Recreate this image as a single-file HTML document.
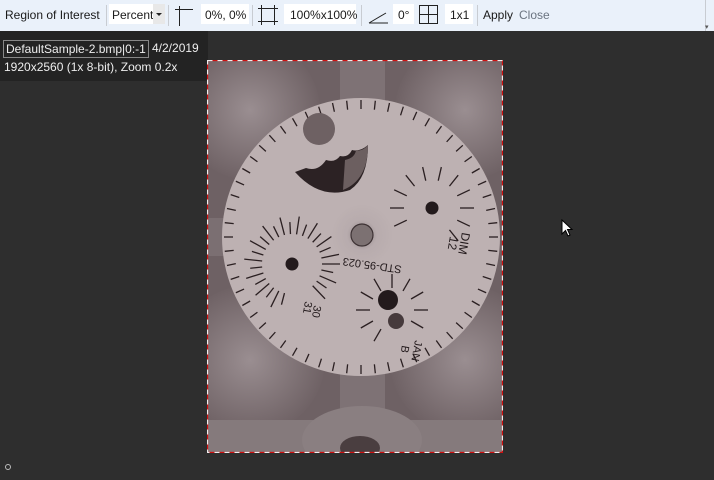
<!DOCTYPE html>
<html><head><style>
body{margin:0;width:714px;height:480px;background:#2e2e2e;position:relative;overflow:hidden;font-family:"Liberation Sans",sans-serif;}
.tb{position:absolute;left:0;top:0;width:714px;height:31px;background:#eaf1fa;font-size:12px;color:#1a1a1a;}
.tb span{position:absolute;top:8px;}
.box{position:absolute;top:4px;height:20px;background:#fff;}
.sep{position:absolute;top:5px;width:1px;height:21px;background:#c8ccd2;}
.info{position:absolute;left:0;top:31px;width:208px;height:50px;background:#232323;color:#eee;font-size:12px;}
</style></head><body>
<div class="tb">
<span style="left:5px">Region of Interest</span>
<div class="sep" style="left:106px"></div>
<div class="box" style="left:109px;width:56px"></div>
<span style="left:112px">Percent</span>
<div style="position:absolute;left:153px;top:4px;width:12px;height:20px;background:#e8e8e8"></div>
<div style="position:absolute;left:156px;top:13px;border-left:3px solid transparent;border-right:3px solid transparent;border-top:3px solid #222"></div>
<div class="sep" style="left:168px"></div>
<svg style="position:absolute;left:175px;top:6px" width="20" height="20"><path d="M0 3.5H18M4.5 0V20" stroke="#222" stroke-width="1"/></svg>
<div class="box" style="left:201px;width:48px"></div>
<span style="left:205px">0%, 0%</span>
<div class="sep" style="left:252px"></div>
<svg style="position:absolute;left:258px;top:5px" width="20" height="20"><path d="M0 3.5H20M0 16.5H20M3.5 0V20M16.5 0V20" stroke="#222"/></svg>
<div class="box" style="left:284px;width:72px"></div>
<span style="left:290px">100%x100%</span>
<div class="sep" style="left:361px"></div>
<svg style="position:absolute;left:368px;top:9px" width="22" height="16"><path d="M1 14H20M1 14L18 4" stroke="#222"/></svg>
<div class="box" style="left:393px;width:21px"></div>
<span style="left:398px">0°</span>
<svg style="position:absolute;left:419px;top:5px" width="20" height="20"><rect x="0.5" y="0.5" width="18" height="18" fill="none" stroke="#222"/><path d="M9.5 0V19M0 9.5H19" stroke="#222"/></svg>
<div class="box" style="left:445px;width:28px"></div>
<span style="left:450px">1x1</span>
<div class="sep" style="left:477px"></div>
<span style="left:483px">Apply</span>
<span style="left:519px;color:#6b7480">Close</span>
<div style="position:absolute;left:705px;top:0;width:1px;height:31px;background:#c8ccd2"></div>
<div style="position:absolute;left:705px;top:23px;font-size:7px;color:#555">▾</div>
</div>
<div class="info">
<div style="position:absolute;left:3px;top:9px;border:1px solid #888;padding:0 2px;height:16px;line-height:16px">DefaultSample-2.bmp|0:-1</div>
<div style="position:absolute;left:152px;top:10px">4/2/2019</div>
<div style="position:absolute;left:4px;top:29px">1920x2560 (1x 8-bit), Zoom 0.2x</div>
</div>
<svg style="position:absolute;left:207px;top:60px" width="296" height="393" viewBox="207 60 296 393">
<defs>
<radialGradient id="b"><stop offset="0" stop-color="#9a8e91"/><stop offset="1" stop-color="#6f6265"/></radialGradient>
<radialGradient id="c"><stop offset="0" stop-color="#6a6064"/><stop offset="0.5" stop-color="#b4a8aa"/><stop offset="1" stop-color="#bcb0b1"/></radialGradient>
</defs>
<rect x="207" y="60" width="296" height="393" fill="#6e6164"/>
<circle cx="250" cy="110" r="70" fill="url(#b)"/>
<circle cx="465" cy="110" r="70" fill="url(#b)"/>
<circle cx="250" cy="360" r="75" fill="url(#b)"/>
<circle cx="465" cy="360" r="75" fill="url(#b)"/>
<rect x="340" y="60" width="45" height="393" fill="#7e7275"/>
<rect x="207" y="218" width="20" height="38" fill="#7b6f72"/>
<rect x="207" y="420" width="296" height="33" fill="#857a7c"/>
<ellipse cx="362" cy="440" rx="60" ry="34" fill="#8a7f81"/>
<ellipse cx="360" cy="448" rx="20" ry="12" fill="#4a3e40"/>
<circle cx="361" cy="237" r="139" fill="#bdb1b2"/>
<circle cx="362" cy="235" r="30" fill="url(#c)" opacity="0.6"/>
<g id="ticks" stroke="#2a1f21" stroke-width="1.3"></g>
<circle cx="319" cy="129" r="16" fill="#6e6163"/>
<path d="M295 172 Q320 200 350 190 Q368 178 368 145 Q360 152 352 150 Q348 158 340 156 Q335 163 326 160 Q318 172 306 168 Z" fill="#2c2224"/>
<path d="M343 190 L345 160 Q355 158 356 150 Q362 152 368 145 Q368 180 343 190Z" fill="#6c5f60"/>
<circle cx="292" cy="264" r="6.5" fill="#231a1c"/>
<circle cx="432" cy="208" r="6.5" fill="#231a1c"/>
<circle cx="388" cy="300" r="10" fill="#231a1c"/>
<circle cx="396" cy="321" r="8" fill="#463a3c"/>
<circle cx="362" cy="235" r="11" fill="#7c7172" stroke="#3d3234" stroke-width="1.2"/>
<g font-family="Liberation Sans,sans-serif" font-size="11" fill="#231a1c">
<text transform="translate(402,266) rotate(188)">STD-95.023</text>
<text transform="translate(450,236) rotate(100)" font-size="12">12</text>
<text transform="translate(462,232) rotate(100)" font-size="12">DIM</text>
<text transform="translate(314,305) rotate(100)" font-size="11">30</text>
<text transform="translate(305,301) rotate(100)" font-size="11">31</text>
<text transform="translate(402,345) rotate(100)" font-size="11">B</text>
<text transform="translate(415,340) rotate(100)" font-size="11">JAN</text>
</g>
<rect x="207.5" y="60.5" width="295" height="392" fill="none" stroke="#d01010" stroke-width="1.3"/>
<rect x="207.5" y="60.5" width="295" height="392" fill="none" stroke="#eee" stroke-width="1.3" stroke-dasharray="5 5"/>
</svg>
<svg style="position:absolute;left:561px;top:219px" width="14" height="20"><path d="M1 1V15L4.5 11.5L7 17L9 16L6.5 10.5H11Z" fill="#fff" stroke="#000"/></svg>
<div style="position:absolute;left:5px;top:464px;width:4px;height:4px;border:1px solid #bbb;border-radius:50%"></div>
<script>
var g=document.getElementById('ticks'),s='';
function T(cx,cy,r1,r2,n,skip,alt){for(var i=0;i<n;i++){var a=i*2*Math.PI/n;if(skip&&skip(a))continue;var c=Math.cos(a),d=Math.sin(a);var ro=(alt&&i%2)?r2-6:r2;s+='<line x1="'+(cx+c*r1)+'" y1="'+(cy+d*r1)+'" x2="'+(cx+c*ro)+'" y2="'+(cy+d*ro)+'"/>';}}
T(361,237,128,137,60);
T(292,264,30,48,31,function(a){return a>0.9&&a<1.7},true);
T(432,208,28,42,14,function(a){return a>1.2&&a<2.4});
T(392,310,22,36,12,function(a){return a>0.8&&a<1.6});
g.innerHTML=s;
</script>
</body></html>
